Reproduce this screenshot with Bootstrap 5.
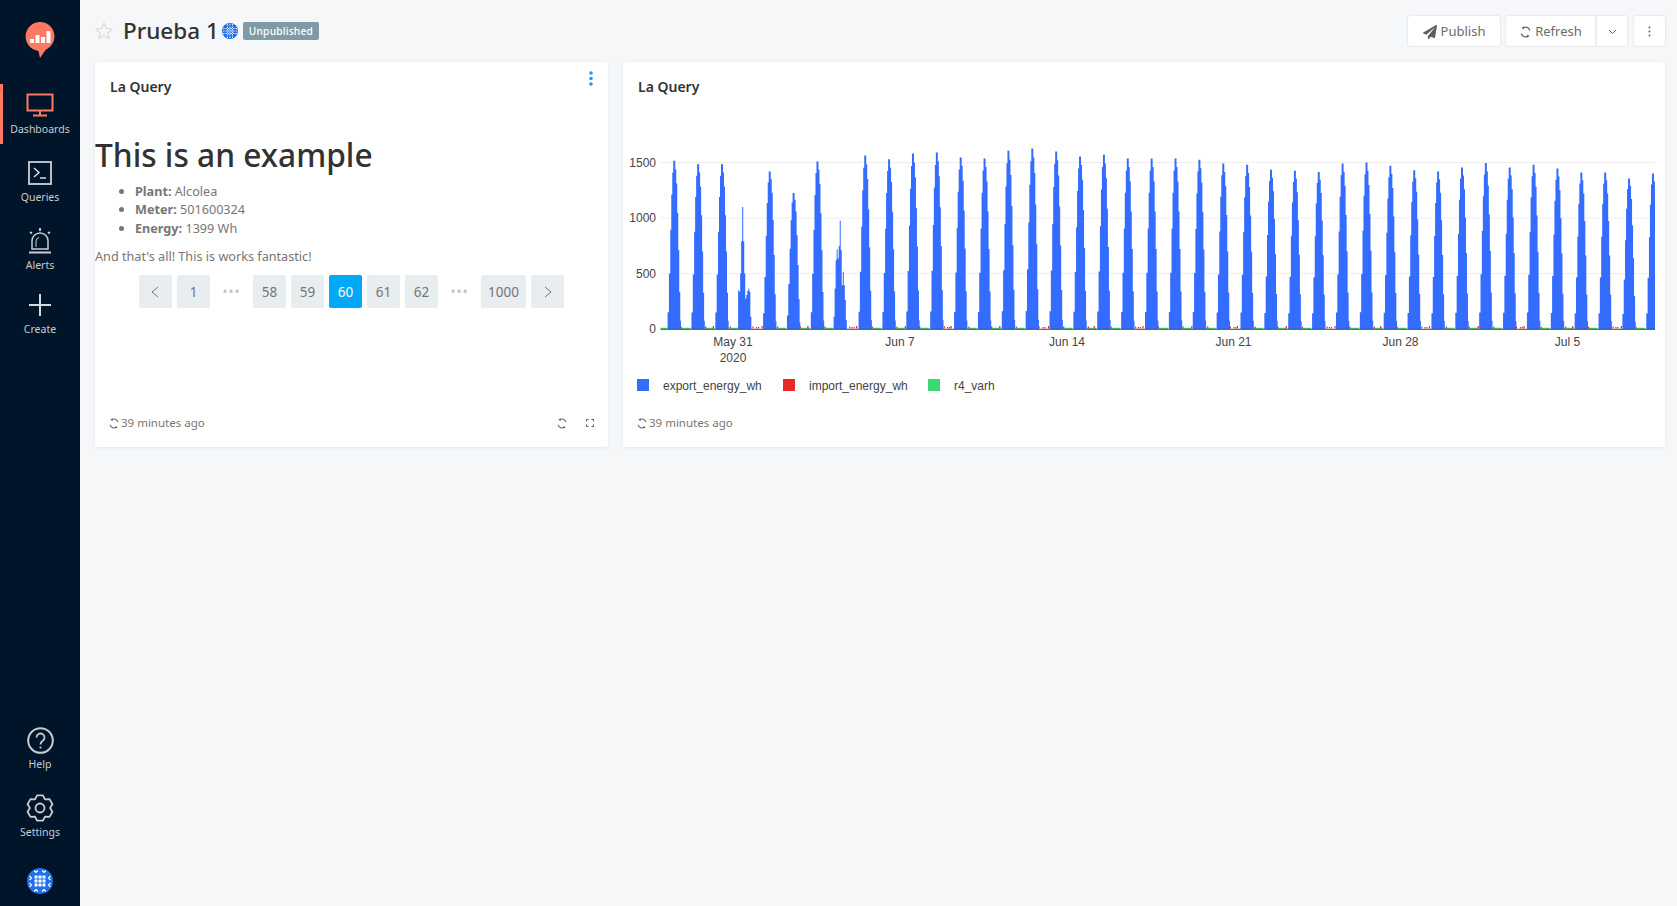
<!doctype html>
<html lang="en">
<head>
<meta charset="utf-8">
<title>Prueba 1</title>
<link href="https://cdn.jsdelivr.net/npm/bootstrap@5.3.0/dist/css/bootstrap.min.css" rel="stylesheet">
<style>
html,body{height:100%}
body{font-family:"Noto Sans",sans-serif;background:#f6f7f9;color:#767676;font-size:13px;overflow:hidden}
.app-side{width:80px;flex:none;background:#001529;height:906px}
.side-logo{height:84px;padding-top:22px}
.side-item{height:68px;position:relative;color:#c8ccd0;font-size:10.5px;line-height:16px;text-decoration:none}
.side-item.short-item{height:64px}
.side-item.is-active::before{content:"";position:absolute;left:0;top:0;width:3px;height:60px;background:#ff7964}
.side-icon{height:30px;margin-top:6px;margin-bottom:1px}
.side-avatar{height:51px;padding-top:13px}
.app-main{padding:0 12px 0 15px;min-width:0}
.page-top{height:62px}
.dash-title{font-size:22.5px;line-height:30px;font-weight:500;color:#323232;margin:0 3px 0 10px}
.status-pill{background:#7f9ba7;color:#fff;font-size:10.2px;font-weight:500;line-height:18px;height:18px;padding:0 6px;border-radius:2px;margin-left:5px;letter-spacing:.2px}
.top-btn{height:30px;background:#fff;border:0;border-radius:2px;color:#6b6b6b;font-size:13px;padding:1px 0 0;box-shadow:0 0 2px rgba(102,136,153,.35)}
.btn-publish{width:92px}
.btn-refresh{width:90px;border-radius:2px 0 0 2px}
.btn-caret{width:31px;border-left:1px solid #e8e8e8;border-radius:0 2px 2px 0}
.btn-more{width:31px;margin-left:7px}
.btn-split{margin-left:6px}
.viz-row{gap:15px}
.viz{height:385px;border:0;border-radius:3px;box-shadow:0 1px 4px rgba(102,136,153,.13)}
.viz-a{width:513px;flex:none}
.viz-b{flex:1 1 0;min-width:0}
.viz-head{height:50px;padding:15px 15px 0;font-size:14px;font-weight:600;color:#323232;line-height:20px;position:relative}
.viz-menu{position:absolute;right:15px;top:9px}
.viz-content{flex:1 1 0;min-height:0}
.md-h{font-size:31.7px;font-weight:500;color:#323232;line-height:40px;margin:23px 0 7px}
.md-list{margin:0 0 10px;padding-left:40px;line-height:18.4px;font-size:12.65px}
.md-list li::marker{font-size:13px}
.md-p{margin:0 0 10px;line-height:18px;font-size:12.65px}
.pager{margin:0;gap:5px;padding:0}
.pager .page-item .page-link{width:33px;height:33px;padding:0;line-height:34px;text-align:center;background:#e8edef;border:0;border-radius:2px;color:#767676;font-size:13.5px;margin:0}
.pager .page-item .wide-link{width:45px}
.pager .page-item.active .page-link{background:#00a8f5;color:#fff}
.pager .page-item .gap-link{background:transparent;color:#c4c4c4;letter-spacing:1px}
.viz-foot{height:47px;padding:0 14px 1px;font-size:11.5px;color:#767676;line-height:16px}
.foot-ico{margin-right:2px}
.foot-full{margin-left:19px}
.foot-bottom{margin-top:auto}
.chart-svg{display:block;width:100%;height:288px}
.chart-svg text{font-family:"Liberation Sans",sans-serif;font-size:12px;fill:#444}
svg{display:block}
</style>
</head>
<body class="d-flex">
<aside class="app-side d-flex flex-column text-center">
  <div class="side-logo d-flex justify-content-center">
    <svg width="30" height="37" viewBox="0 0 30 37"><path d="M15 0a14.5 14.5 0 0 1 5.5 27.9L15 36l-1.6-7.1A14.5 14.5 0 0 1 15 0z" fill="#ff7964"/><g fill="#fff"><rect x="5" y="17" width="4" height="4"/><rect x="10.5" y="13" width="4" height="8"/><rect x="16" y="15" width="4" height="6"/><rect x="21.500" y="9" width="4" height="12"/></g></svg>
  </div>
  <a class="side-item is-active d-block" href="#">
    <div class="side-icon d-flex align-items-center justify-content-center"><svg width="28" height="24" viewBox="0 0 28 24" fill="none" stroke="#ff7964" stroke-width="2"><rect x="1.500" y="1.500" width="25" height="16"/><path d="M14 18v4M7 22.500h14"/></svg></div>
    Dashboards
  </a>
  <a class="side-item d-block" href="#">
    <div class="side-icon d-flex align-items-center justify-content-center"><svg width="24" height="24" viewBox="0 0 24 24" fill="none" stroke="#b8bdc3" stroke-width="1.500"><rect x="1" y="1" width="22" height="22" stroke-width="2"/><path d="M6 7l5 4.500-5 4.500" stroke="#d8dbde"/><path d="M12 17h6" stroke="#d8dbde"/></svg></div>
    Queries
  </a>
  <a class="side-item short-item d-block" href="#">
    <div class="side-icon d-flex align-items-center justify-content-center"><svg width="24" height="28" viewBox="0 0 24 28" fill="none" stroke="#c8ccd0" stroke-width="1.500"><path d="M4 22v-8a8 8 0 0 1 16 0v8z"/><path d="M1 25.500h22" stroke-width="2"/><path d="M12 1v3M2 5l2 1.500M22 5l-2 1.500" stroke-width="2"/><path d="M8 20v-6a4 4 0 0 1 3-3.500" stroke-width="1"/></svg></div>
    Alerts
  </a>
  <a class="side-item d-block" href="#">
    <div class="side-icon d-flex align-items-center justify-content-center"><svg width="22" height="22" viewBox="0 0 22 22" stroke="#d8dbde" stroke-width="2"><path d="M11 0v22M0 11h22"/></svg></div>
    Create
  </a>
  <div class="mt-auto"></div>
  <a class="side-item d-block" href="#">
    <div class="side-icon d-flex align-items-center justify-content-center"><svg width="27" height="27" viewBox="0 0 27 27" fill="none" stroke="#c8ccd0" stroke-width="2"><circle cx="13.500" cy="13.500" r="12.300"/><path d="M9.500 10.500a4 4 0 1 1 6 3.500c-1.500.9-2 1.500-2 3.500" stroke-width="1.800"/><circle cx="13.500" cy="20.500" r="1.100" fill="#c8ccd0" stroke="none"/></svg></div>
    Help
  </a>
  <a class="side-item d-block" href="#">
    <div class="side-icon d-flex align-items-center justify-content-center"><svg width="28" height="28" viewBox="0 0 28 28" fill="none" stroke="#c8ccd0" stroke-width="1.800" stroke-linejoin="round"><path id="gearPath" d="M12 1h4l1 3 3 1.500 3-1 2 3.500-2 2.500v3l2 2.500-2 3.500-3-1L17 24l-1 3h-4l-1-3-3-1.500-3 1-2-3.500 2-2.500v-3l-2-2.500 2-3.500 3 1L11 4z"/><circle cx="14" cy="14" r="4.500"/></svg></div>
    Settings
  </a>
  <div class="side-avatar d-flex justify-content-center">
    <svg width="26" height="26" viewBox="0 0 26 26"><circle cx="13" cy="13" r="13" fill="#1f6fe8"/><g fill="#fff"><rect x="7.500" y="7.500" width="3" height="3"/><rect x="11.500" y="7.500" width="3" height="3"/><rect x="15.500" y="7.500" width="3" height="3"/><rect x="7.500" y="11.500" width="3" height="3"/><rect x="11.500" y="11.500" width="3" height="3"/><rect x="15.500" y="11.500" width="3" height="3"/><rect x="7.500" y="15.500" width="3" height="3"/><rect x="11.500" y="15.500" width="3" height="3"/><rect x="15.500" y="15.500" width="3" height="3"/></g><g fill="none" stroke="#fff" stroke-width="1.200"><path d="M7 2.500l2 2 2-2M15 2.500l2 2 2-2M7 23.500l2-2 2 2M15 23.500l2-2 2 2M2.500 8l2 2-2 2M2.500 15l2 2-2 2M23.500 8l-2 2 2 2M23.500 15l-2 2 2 2"/></g></svg>
  </div>
</aside>
<main class="app-main flex-grow-1">
  <div class="page-top d-flex align-items-center">
    <svg width="18" height="18" viewBox="0 0 18 18" fill="none" stroke="#dcdcdc" stroke-width="1.200"><path d="M9 1.200l2.400 5.100 5.600.7-4.100 3.800 1.100 5.500L9 13.600l-5 2.700 1.100-5.500L1 7l5.600-.7z"/></svg>
    <h1 class="dash-title">Prueba 1</h1>
    <svg width="16" height="16" viewBox="0 0 16 16"><circle cx="8" cy="8" r="8" fill="#1f6fe8"/><g stroke="#fff" stroke-width=".9"><path d="M1 5.500h14M1 8h14M1 10.500h14M5.500 1v14M8 1v14M10.500 1v14" stroke-dasharray="1.500 1"/></g></svg>
    <span class="status-pill">Unpublished</span>
    <div class="ms-auto d-flex">
      <button class="btn top-btn btn-publish d-flex align-items-center justify-content-center gap-1" type="button"><svg width="14" height="14" viewBox="0 0 512 512" fill="#5f5f5f"><path d="M476 3.200L12.500 270.600c-18.100 10.400-15.800 35.600 2.200 43.200L121 358.400l287.300-253.200c5.500-4.900 13.300 2.600 8.600 8.300L176 407v80.500c0 23.600 28.500 32.900 42.500 15.800L282 426l124.600 52.200c14.200 6 30.400-2.900 33-18.200l72-432C515 7.800 493.300-6.800 476 3.200z"/></svg>Publish</button>
      <div class="btn-split d-flex">
        <button class="btn top-btn btn-refresh d-flex align-items-center justify-content-center gap-1" type="button"><svg width="11" height="12" viewBox="0 0 11 12" fill="none" stroke="#666" stroke-width="1.200"><path d="M9.800 4.500A4.500 4.500 0 0 0 2.800 2M1.200 7.500A4.500 4.500 0 0 0 8.200 10"/><path d="M4 0.200v3.300L1.500 2zM7 11.800V8.500L9.500 10z" fill="#666" stroke="none"/></svg>Refresh</button>
        <button class="btn top-btn btn-caret d-flex align-items-center justify-content-center" type="button"><svg width="9" height="6" viewBox="0 0 9 6" fill="none" stroke="#666" stroke-width="1"><path d="M1 1l3.500 3.500L8 1"/></svg></button>
      </div>
      <button class="btn top-btn btn-more d-flex align-items-center justify-content-center" type="button"><svg width="3" height="11" viewBox="0 0 3 11" fill="#666"><circle cx="1.500" cy="1.500" r="1"/><circle cx="1.500" cy="5.500" r="1"/><circle cx="1.500" cy="9.500" r="1"/></svg></button>
    </div>
  </div>
  <div class="d-flex viz-row">
    <section class="card viz viz-a">
      <div class="viz-head">La Query
        <span class="viz-menu"><svg width="4" height="15" viewBox="0 0 4 15" fill="#2196f3"><circle cx="2" cy="2" r="1.800"/><circle cx="2" cy="7.500" r="1.800"/><circle cx="2" cy="13" r="1.800"/></svg></span>
      </div>
      <div class="viz-content">
        <h2 class="md-h">This is an example</h2>
        <ul class="md-list">
          <li><b>Plant:</b> Alcolea</li>
          <li><b>Meter:</b> 501600324</li>
          <li><b>Energy:</b> 1399 Wh</li>
        </ul>
        <p class="md-p">And that's all! This is works fantastic!</p>
        <ul class="pagination pager justify-content-center">
          <li class="page-item"><a class="page-link" href="#"><svg class="mx-auto" width="33" height="33" viewBox="0 0 33 33" fill="none" stroke="#767676" stroke-width="1"><path d="M19 12l-6 5 6 5"/></svg></a></li>
          <li class="page-item"><a class="page-link" href="#">1</a></li>
          <li class="page-item"><a class="page-link gap-link" href="#">•••</a></li>
          <li class="page-item"><a class="page-link" href="#">58</a></li>
          <li class="page-item"><a class="page-link" href="#">59</a></li>
          <li class="page-item active"><a class="page-link" href="#">60</a></li>
          <li class="page-item"><a class="page-link" href="#">61</a></li>
          <li class="page-item"><a class="page-link" href="#">62</a></li>
          <li class="page-item"><a class="page-link gap-link" href="#">•••</a></li>
          <li class="page-item"><a class="page-link wide-link" href="#">1000</a></li>
          <li class="page-item"><a class="page-link" href="#"><svg class="mx-auto" width="33" height="33" viewBox="0 0 33 33" fill="none" stroke="#767676" stroke-width="1"><path d="M14 12l6 5-6 5"/></svg></a></li>
        </ul>
      </div>
      <div class="viz-foot d-flex align-items-center">
        <svg class="foot-ico" width="10" height="11" viewBox="0 0 11 12" fill="none" stroke="#666" stroke-width="1.200"><path d="M9.800 4.500A4.500 4.500 0 0 0 2.800 2M1.200 7.500A4.500 4.500 0 0 0 8.200 10"/><path d="M4 0.200v3.300L1.500 2zM7 11.800V8.500L9.500 10z" fill="#666" stroke="none"/></svg>
        <span>39 minutes ago</span>
        <svg class="ms-auto" width="10" height="11" viewBox="0 0 11 12" fill="none" stroke="#666" stroke-width="1.200"><path d="M9.800 4.500A4.500 4.500 0 0 0 2.800 2M1.200 7.500A4.500 4.500 0 0 0 8.200 10"/><path d="M4 0.200v3.300L1.500 2zM7 11.800V8.500L9.500 10z" fill="#666" stroke="none"/></svg>
        <svg class="foot-full" width="8" height="8" viewBox="0 0 8 8" fill="none" stroke="#555" stroke-width="1"><path d="M.5 2.500v-2h2M5.500.5h2v2M7.500 5.500v2h-2M2.500 7.500h-2v-2"/></svg>
      </div>
    </section>
    <section class="card viz viz-b">
      <div class="viz-head">La Query</div>
      <svg id="chart" class="chart-svg" viewBox="0 0 1042 288" preserveAspectRatio="none">
        <g stroke="#eee" stroke-width="1"><path d="M37.500 50.500H1032M37.500 106H1032M37.500 161.500H1032"/></g>
        <g id="bars"></g>
        <path d="M37.500 217.300H1032" stroke="#444" stroke-width="1"/>
        <g text-anchor="end">
          <text x="33" y="55">1500</text><text x="33" y="110">1000</text><text x="33" y="166">500</text><text x="33" y="221">0</text>
        </g>
        <g text-anchor="middle">
          <text x="110" y="234">May 31</text><text x="110" y="250">2020</text>
          <text x="277" y="234">Jun 7</text><text x="444" y="234">Jun 14</text>
          <text x="610.500" y="234">Jun 21</text><text x="777.500" y="234">Jun 28</text><text x="944.500" y="234">Jul 5</text>
        </g>
        <rect x="14" y="267" width="12" height="12" fill="#336cff"/><text x="40" y="277.500">export_energy_wh</text>
        <rect x="160" y="267" width="12" height="12" fill="#e92828"/><text x="186" y="277.500">import_energy_wh</text>
        <rect x="305" y="267" width="12" height="12" fill="#3bd973"/><text x="331" y="277.500">r4_varh</text>
      </svg>
      <div class="viz-foot foot-bottom d-flex align-items-center">
        <svg class="foot-ico" width="10" height="11" viewBox="0 0 11 12" fill="none" stroke="#666" stroke-width="1.200"><path d="M9.800 4.500A4.500 4.500 0 0 0 2.800 2M1.200 7.500A4.500 4.500 0 0 0 8.200 10"/><path d="M4 0.200v3.300L1.500 2zM7 11.800V8.500L9.500 10z" fill="#666" stroke="none"/></svg>
        <span>39 minutes ago</span>
      </div>
    </section>
  </div>
</main>
<script>
(function(){
  var peaks=[1515,1485,1485,0,1420,1225,1510,0,1563,1530,1580,1590,1545,1535,1605,1625,1600,1555,1570,1535,1535,1535,1525,1490,1480,1435,1425,1415,1490,1500,1470,1430,1420,1455,1495,1455,1480,1445,1410,1410,1355,1400];
  var prof=[.1,.33,.59,.8,.93,1,.95,.865,.69,.47,.22,.05];
  var widths=[1.33,1.33,1,1,1,2,1,1,1,1,1,.7];
  var special={3:[350,335,500,790,1100,790,500,275,305,345,365,335,110],
               7:[110,365,620,715,635,745,975,710,395,515,395,260,80]};
  var y0=217,sc=111/1000,base=50,xmax=1032;
  var ns="http://www.w3.org/2000/svg",bars=document.getElementById("bars");
  var d="";
  peaks.forEach(function(p,i){
    var sp=special[i];
    var vals=sp||prof.map(function(f){return f*p});
    var x=base+i*23.87-(sp?6.5:5.4);
    d+="M"+x.toFixed(2)+" "+y0;
    vals.forEach(function(v,h){
      var w=sp?1.02:widths[h];
      var b=Math.min(x+w,xmax);
      if(x>=xmax)return;
      var y=(y0-v*sc).toFixed(1);
      d+="L"+x.toFixed(2)+" "+y+"L"+b.toFixed(2)+" "+y;
      x=b;
    });
    d+="L"+Math.min(x,xmax).toFixed(2)+" "+y0+"Z";
  });
  var g="M37.500 216.400H44",r="";
  for(var i=0;i<41;i++){
    var s=base+i*23.87+8,e=s+9.500;
    if(i%4!=3)g+="M"+s.toFixed(1)+" 216.400H"+e.toFixed(1);
    var ra=(i*7)%5;
    r+="M"+(s+ra*.4).toFixed(1)+" 216.500V214.500";
    if(i%2)r+="M"+(e-(i%3)).toFixed(1)+" 216.500V214";
    if(i%4==3)r+="M"+(s+4).toFixed(1)+" 216.500V215M"+(s+6).toFixed(1)+" 216.500V215";
  }
  [[d,"#336cff",0],[g,"#3bd973",1.200],[r,"#e92828",1.200]].forEach(function(o){
    var pa=document.createElementNS(ns,"path");
    pa.setAttribute("d",o[0]);
    if(o[2]){pa.setAttribute("fill","none");pa.setAttribute("stroke",o[1]);pa.setAttribute("stroke-width",o[2]);}
    else pa.setAttribute("fill",o[1]);
    bars.appendChild(pa);
  });
  var pts=[];
  for(var k=0;k<6;k++){
    var c=-90+k*60;
    [[-28,10.2],[-13,13],[13,13],[28,10.2]].forEach(function(t){
      var an=(c+t[0])*Math.PI/180;
      pts.push((14+t[1]*Math.cos(an)).toFixed(2)+" "+(14+t[1]*Math.sin(an)).toFixed(2));
    });
  }
  document.getElementById("gearPath").setAttribute("d","M"+pts.join("L")+"Z");
})();
</script>
</body>
</html>
